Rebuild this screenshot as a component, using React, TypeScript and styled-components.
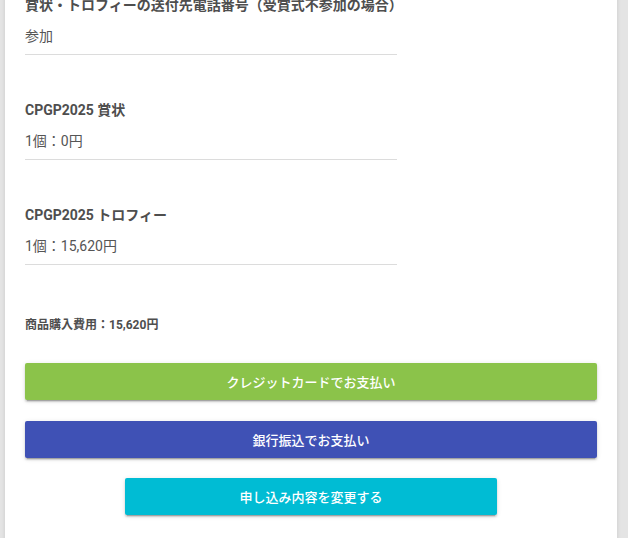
import React from 'react';
import styled, { createGlobalStyle } from 'styled-components';

const GlobalStyle = createGlobalStyle`
  html, body {
    margin: 0;
    padding: 0;
    background: #e4e4e4;
    font-family: Roboto, "Noto Sans CJK JP", sans-serif;
    overflow: hidden;
  }
`;

const Page = styled.div`
  padding: 0 11px 0 5px;
  margin-top: -5px;
`;

const Card = styled.div`
  background: #fff;
  padding: 0 20px 40px;
  box-shadow: 0 1px 4px rgba(0, 0, 0, 0.12);
`;

const Field = styled.div`
  margin-bottom: 45px;
`;

const Label = styled.div`
  font-size: 14px;
  line-height: 21px;
  font-weight: 700;
  color: #4e4e4e;
  margin-bottom: 10px;
  white-space: nowrap;
`;

const Value = styled.div`
  width: 65%;
  font-size: 14px;
  line-height: 21px;
  color: #555;
  padding-bottom: 7px;
  border-bottom: 1px solid #dcdcdc;
`;

const Total = styled.div`
  font-size: 12px;
  line-height: 16px;
  font-weight: 700;
  color: #4e4e4e;
  margin: 52px 0 30px;
`;

const Actions = styled.div`
  display: flex;
  flex-direction: column;
  align-items: center;
  gap: 20.5px;
`;

const Button = styled.button<{ $bg: string; $narrow?: boolean }>`
  width: ${(p) => (p.$narrow ? '372px' : '100%')};
  height: 37px;
  border: none;
  border-radius: 2px;
  background: ${(p) => p.$bg};
  color: #fff;
  font-family: Roboto, "Noto Sans CJK JP", sans-serif;
  font-size: 13px;
  font-weight: 500;
  cursor: pointer;
  box-shadow: 0 2px 2px 0 rgba(0, 0, 0, 0.14), 0 3px 1px -2px rgba(0, 0, 0, 0.2),
    0 1px 5px 0 rgba(0, 0, 0, 0.12);
`;

const fields = [
  { label: '賞状・トロフィーの送付先電話番号（受賞式不参加の場合）', value: '参加' },
  { label: 'CPGP2025 賞状', value: '1個：0円' },
  { label: 'CPGP2025 トロフィー', value: '1個：15,620円' },
];

const App: React.FC = () => {
  return (
    <>
      <GlobalStyle />
      <Page>
        <Card>
          {fields.map((f, i) => (
            <Field key={i}>
              <Label>{f.label}</Label>
              <Value>{f.value}</Value>
            </Field>
          ))}
          <Total>商品購入費用：15,620円</Total>
          <Actions>
            <Button $bg="#8bc34a">クレジットカードでお支払い</Button>
            <Button $bg="#3f51b5">銀行振込でお支払い</Button>
            <Button $bg="#00bcd4" $narrow>
              申し込み内容を変更する
            </Button>
          </Actions>
        </Card>
      </Page>
    </>
  );
};

export default App;
